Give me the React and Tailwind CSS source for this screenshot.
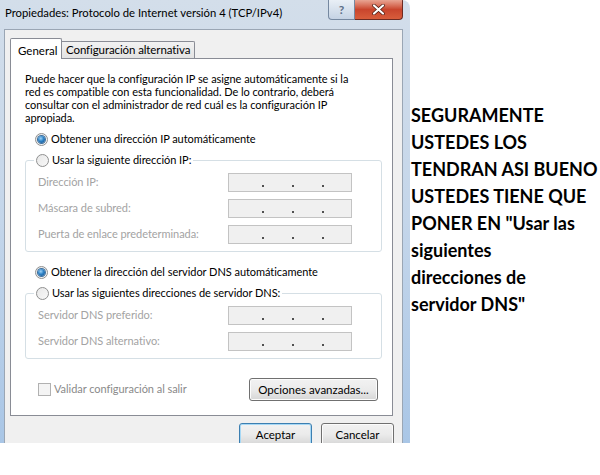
import React from 'react';

// Windows 7 style radio button (13px)
const Radio = ({ checked }) => (
  <span className="relative inline-flex w-[13px] h-[13px] shrink-0 items-center justify-center rounded-full border border-[#8f9090] bg-gradient-to-br from-[#e8e8e8] to-[#f8f8f8]">
    {checked && (
      <span className="w-[7px] h-[7px] rounded-full bg-[radial-gradient(circle_at_40%_35%,#9fd4f8_0%,#2e82c6_45%,#114a83_100%)] ring-1 ring-[#3d6f9d]" />
    )}
  </span>
);

// Disabled IP address box with three separating dots
const IpField = () => (
  <div className="w-[124px] h-[19px] shrink-0 border border-[#c3c3c3] bg-[#f0f0f0] flex items-end pb-[4px] pl-[33px] gap-[28px]">
    <span className="w-[2px] h-[2px] bg-[#505050]" />
    <span className="w-[2px] h-[2px] bg-[#505050]" />
    <span className="w-[2px] h-[2px] bg-[#505050]" />
  </div>
);

const WinButton = ({ children, primary, className = '' }) => (
  <button
    className={`h-[23px] rounded-[3px] border ${primary ? 'border-[#3c7fb1] shadow-[inset_0_0_0_1px_#a7d8f5]' : 'border-[#707070] shadow-[inset_0_0_0_1px_#fcfcfc]'} bg-gradient-to-b from-[#f2f2f2] via-[#ebebeb] to-[#d6d6d6] text-[11.5px] text-black leading-none ${className}`}
  >
    {children}
  </button>
);

const GroupBox = ({ title, rows }) => (
  <fieldset className="ml-[14px] mr-[10px] border border-[#d5dfe5] rounded-[3px] pl-[12px] pr-[29px] pb-[7px]">
    <legend className="-ml-[4px] px-[2px] flex items-center gap-[3px] h-[14px]">
      <Radio />
      <span className="text-black">{title}</span>
    </legend>
    <div className="flex flex-col gap-[7px] mt-[6px]">
      {rows.map((label) => (
        <div key={label} className="flex items-center justify-between h-[19px]">
          <span className="text-[#a3a3a3] whitespace-nowrap">{label}</span>
          <IpField />
        </div>
      ))}
    </div>
  </fieldset>
);

const IpDialog = () => (
  <div className="relative w-[410px] h-[443px] shrink-0 overflow-hidden rounded-tr-[8px] bg-gradient-to-b from-[#d3deea] via-[#c4d6ea] to-[#a9c6e6] flex flex-col">
    {/* title bar */}
    <div className="h-[29px] flex items-start shrink-0">
      <span className="pl-[5px] pt-[5px] text-[11.3px] text-black whitespace-nowrap">Propiedades: Protocolo de Internet versión 4 (TCP/IPv4)</span>
      <div className="ml-auto mr-[7px] flex">
        <div className="w-[27px] h-[20px] rounded-bl-[4px] border border-t-0 border-[#7588a0] bg-gradient-to-b from-[#e9eff6] to-[#c5d3e4] flex items-center justify-center text-[12px] font-bold text-[#5c6f88] leading-none">?</div>
        <div className="w-[48px] h-[20px] rounded-br-[4px] border border-t-0 border-l-0 border-[#6d2b22] bg-gradient-to-b from-[#e8a493] via-[#c9452d] to-[#d85d3b] flex items-center justify-center">
          <svg width="13" height="11" viewBox="0 0 13 11">
            <path d="M2 1.5 L11 9.5 M11 1.5 L2 9.5" stroke="#4a1a12" strokeWidth="3.6" strokeLinecap="round" />
            <path d="M2 1.5 L11 9.5 M11 1.5 L2 9.5" stroke="#ffffff" strokeWidth="2.2" strokeLinecap="round" />
          </svg>
        </div>
      </div>
    </div>

    {/* client area */}
    <div className="flex-1 ml-[4px] mr-[7px] bg-[#f0f0f0] border-t border-l border-r border-[#9aa6b4] pt-[7px] pl-[5px] pr-[9px] flex flex-col">
      <div className="flex items-end h-[21px] text-[11.5px]">
        <div className="relative z-10 w-[52px] h-[21px] -mb-px bg-white border border-b-0 border-[#898c95] rounded-t-[2px] pl-[7px] pt-[3px]">General</div>
        <div className="h-[17px] px-[4px] border border-l-0 border-b-0 border-[#898c95] rounded-tr-[2px] bg-gradient-to-b from-[#f2f2f2] to-[#e3e3e3] leading-[16px] whitespace-nowrap tracking-[-0.1px]">Configuración alternativa</div>
      </div>

      <div className="h-[358px] bg-white border border-[#898c95] text-[11px] tracking-[-0.05px] pt-[13px] flex flex-col">
        <p className="pl-[14px] leading-[13px] whitespace-nowrap text-black">
          Puede hacer que la configuración IP se asigne automáticamente si la<br />
          red es compatible con esta funcionalidad. De lo contrario, deberá<br />
          consultar con el administrador de red cuál es la configuración IP<br />
          apropiada.
        </p>

        <label className="mt-[8px] ml-[24px] flex items-center gap-[3px] h-[14px]">
          <Radio checked />
          <span>Obtener una dirección IP automáticamente</span>
        </label>

        <div className="mt-[7px]">
          <GroupBox
            title="Usar la siguiente dirección IP:"
            rows={['Dirección IP:', 'Máscara de subred:', 'Puerta de enlace predeterminada:']}
          />
        </div>

        <label className="mt-[13px] ml-[24px] flex items-center gap-[3px] h-[14px]">
          <Radio checked />
          <span>Obtener la dirección del servidor DNS automáticamente</span>
        </label>

        <div className="mt-[7px]">
          <GroupBox
            title="Usar las siguientes direcciones de servidor DNS:"
            rows={['Servidor DNS preferido:', 'Servidor DNS alternativo:']}
          />
        </div>

        <div className="mt-[19px] flex items-center pl-[27px] pr-[14px]">
          <span className="w-[13px] h-[13px] border border-[#b1b1b1] bg-[#f4f4f4]" />
          <span className="ml-[3px] text-[#8a8a8a]">Validar configuración al salir</span>
          <WinButton className="ml-auto w-[129px] h-[21px] tracking-normal">Opciones avanzadas...</WinButton>
        </div>
      </div>

      <div className="mt-[7px] flex justify-end gap-[9px]">
        <WinButton primary className="w-[73px]">Aceptar</WinButton>
        <WinButton className="w-[73px] mr-[-1px]">Cancelar</WinButton>
      </div>
    </div>
  </div>
);

export default function App() {
  return (
    <div className="w-[600px] h-[475px] bg-white flex font-['Lato',sans-serif] overflow-hidden">
      <IpDialog />
      <div className="pt-[102px] pl-[1px] font-['Lato',sans-serif] font-bold text-[18px] leading-[27px] text-black whitespace-nowrap">
        SEGURAMENTE<br />
        USTEDES LOS<br />
        TENDRAN ASI BUENO<br />
        USTEDES TIENE QUE<br />
        PONER EN "Usar las<br />
        siguientes<br />
        direcciones de<br />
        servidor DNS"
      </div>
    </div>
  );
}
